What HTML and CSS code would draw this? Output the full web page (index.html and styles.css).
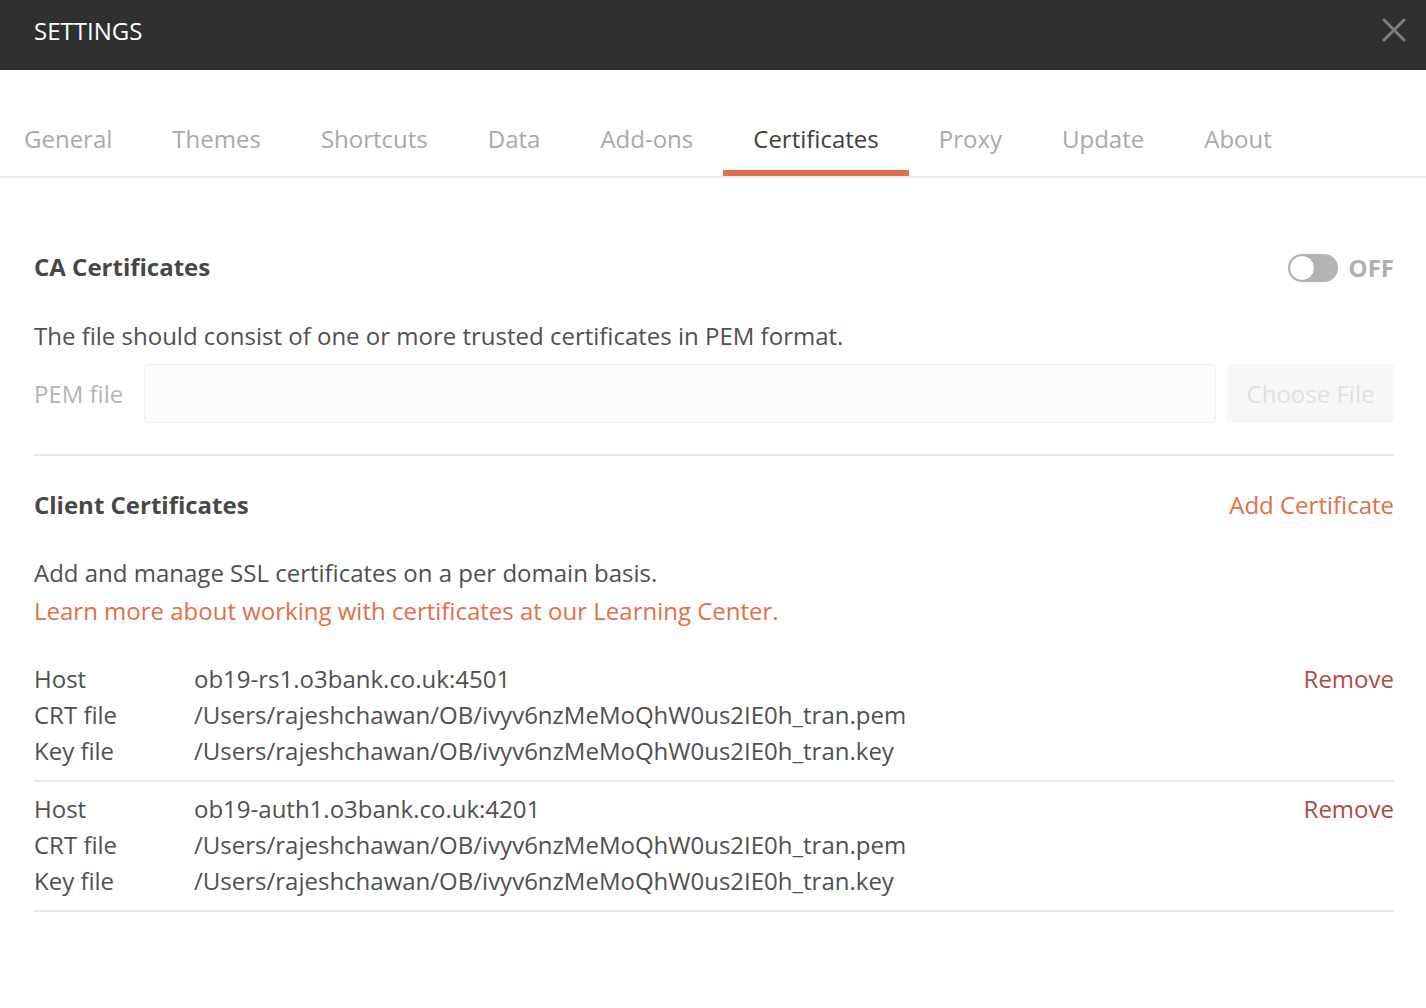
FILE: index.html
```html
<!DOCTYPE html>
<html>
<head>
<meta charset="utf-8">
<link rel="stylesheet" href="styles.css">
</head>
<body>
<div class="modal">
  <header class="topbar">
    <div class="title">SETTINGS</div>
    <svg class="close" width="24" height="24" viewBox="0 0 24 24"><path d="M2 2L22 22M22 2L2 22" stroke="#7c7c7c" stroke-width="3" stroke-linecap="round"/></svg>
  </header>
  <nav class="tabs">
    <div class="tab">General</div>
    <div class="tab">Themes</div>
    <div class="tab">Shortcuts</div>
    <div class="tab">Data</div>
    <div class="tab">Add-ons</div>
    <div class="tab active">Certificates</div>
    <div class="tab">Proxy</div>
    <div class="tab">Update</div>
    <div class="tab">About</div>
  </nav>
  <main class="content">
    <section class="ca">
      <div class="sec-head">
        <h2>CA Certificates</h2>
        <div class="toggle-wrap">
          <span class="toggle"><span class="knob"></span></span>
          <span class="off">OFF</span>
        </div>
      </div>
      <p class="desc">The file should consist of one or more trusted certificates in PEM format.</p>
      <div class="pem-row">
        <span class="pem-label">PEM file</span>
        <div class="pem-input"></div>
        <div class="choose">Choose File</div>
      </div>
    </section>
    <section class="client">
      <div class="sec-head">
        <h2>Client Certificates</h2>
        <span class="add">Add Certificate</span>
      </div>
      <div class="client-desc">
        <p>Add and manage SSL certificates on a per domain basis.</p>
        <p class="link">Learn more about working with certificates at our Learning Center.</p>
      </div>
      <div class="cert">
        <div class="cert-grid">
          <span class="k">Host</span><span class="v">ob19-rs1.o3bank.co.uk:4501</span>
          <span class="k">CRT file</span><span class="v">/Users/rajeshchawan/OB/ivyv6nzMeMoQhW0us2IE0h_tran.pem</span>
          <span class="k">Key file</span><span class="v">/Users/rajeshchawan/OB/ivyv6nzMeMoQhW0us2IE0h_tran.key</span>
        </div>
        <span class="remove">Remove</span>
      </div>
      <div class="cert">
        <div class="cert-grid">
          <span class="k">Host</span><span class="v">ob19-auth1.o3bank.co.uk:4201</span>
          <span class="k">CRT file</span><span class="v">/Users/rajeshchawan/OB/ivyv6nzMeMoQhW0us2IE0h_tran.pem</span>
          <span class="k">Key file</span><span class="v">/Users/rajeshchawan/OB/ivyv6nzMeMoQhW0us2IE0h_tran.key</span>
        </div>
        <span class="remove">Remove</span>
      </div>
    </section>
  </main>
</div>
</body>
</html>
```
FILE: styles.css
```css
* { box-sizing: border-box; }
html, body { margin: 0; padding: 0; background: #fff; }
body {
  font-family: "Open Sans", "Noto Sans", sans-serif;
  font-size: 24px;
  color: #505050;
  overflow: hidden;
}
.topbar {
  height: 70px;
  background: #303030;
  display: flex;
  align-items: flex-start;
  justify-content: space-between;
  padding: 0 20px 0 34px;
}
.title {
  color: #fff;
  font-size: 24px;
  line-height: 30px;
  margin-top: 16px;
}
.close { display: block; margin-top: 18px; }
.tabs {
  display: flex;
  border-bottom: 2px solid #ececec;
  margin-left: -6px;
  height: 108px;
}
.tab {
  padding: 53px 30px 15px;
  line-height: 32px;
  color: #a9a9a9;
  border-bottom: 6px solid transparent;
  margin-bottom: -2px;
}
.tab.active {
  color: #404040;
  border-bottom-color: #e0704a;
  margin-bottom: 0;
}
.content {
  padding: 75px 32px 0 34px;
}
.sec-head {
  display: flex;
  align-items: center;
  justify-content: space-between;
  height: 28px;
}
h2 {
  margin: 0;
  font-size: 24px;
  font-weight: 700;
  color: #474747;
  line-height: 28px;
}
.toggle-wrap { display: flex; align-items: center; gap: 11px; margin-top: 1px; }
.toggle {
  width: 50px;
  height: 28px;
  border-radius: 14px;
  background: #b3b3b3;
  display: flex;
  align-items: center;
  padding: 0 1px;
}
.knob {
  width: 26px;
  height: 26px;
  border-radius: 50%;
  background: #fff;
  border: 1px solid #a8a8a8;
}
.off {
  font-weight: 700;
  color: #b0b0b0;
  line-height: 28px;
}
.desc {
  margin: 40px 0 0;
  line-height: 30px;
}
.pem-row {
  display: flex;
  align-items: center;
  margin-top: 13px;
  height: 59px;
}
.pem-label {
  color: #b5b5b5;
  width: 110px;
  flex: none;
}
.pem-input {
  flex: 1;
  height: 59px;
  border: 1px solid #f0f0f0;
  border-radius: 4px;
  background: #fcfcfc;
}
.choose {
  margin-left: 11px;
  width: 167px;
  height: 59px;
  border-radius: 4px;
  background: #f7f7f7;
  color: #e2e2e2;
  display: flex;
  align-items: center;
  justify-content: center;
}
.ca {
  padding-bottom: 31px;
  border-bottom: 2px solid #e8e8e8;
}
.client { padding-top: 35px; }
.add { color: #e0704a; line-height: 28px; }
.client-desc { margin-top: 35px; }
.client-desc p { margin: 0; line-height: 38px; }
.client-desc .link { color: #e0704a; }
.cert {
  display: flex;
  justify-content: space-between;
  align-items: flex-start;
  border-bottom: 2px solid #e8e8e8;
  padding: 11px 0 11px;
}
.client-desc + .cert { margin-top: 20px; padding-top: 11px; }
.cert + .cert { padding-top: 9px; }
.cert-grid {
  display: grid;
  grid-template-columns: 160px auto;
  line-height: 36px;
}
.remove { color: #b24a45; line-height: 36px; }
```
